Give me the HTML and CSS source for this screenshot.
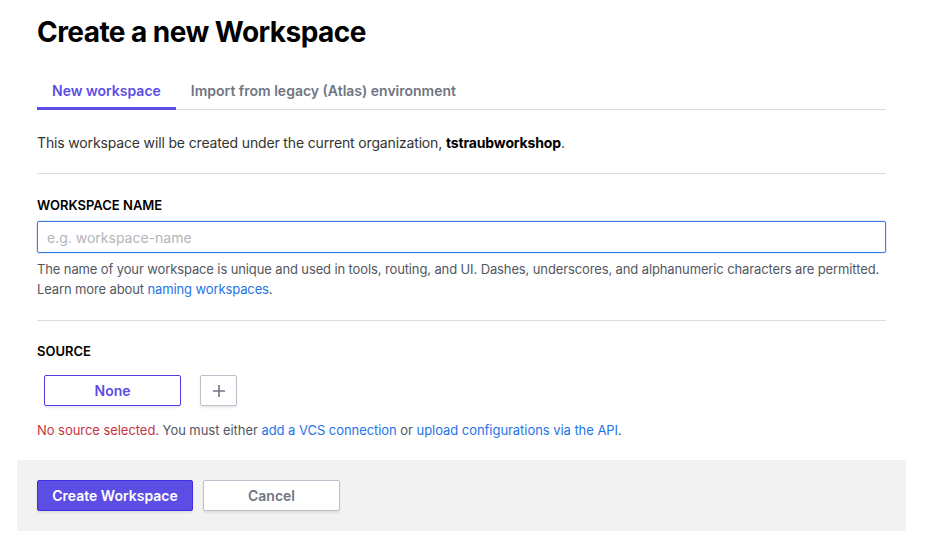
FILE: index.html
```html
<!DOCTYPE html>
<html lang="en">
<head>
<meta charset="utf-8">
<title>Create a new Workspace</title>
<link rel="stylesheet" href="styles.css">
</head>
<body>
<div class="page">
  <div class="content">
    <h1 class="title">Create a new Workspace</h1>
    <nav class="tabs">
      <a class="tab tab-active">New workspace</a>
      <a class="tab">Import from legacy (Atlas) environment</a>
    </nav>
    <p class="desc">This workspace will be created under the current organization, <strong>tstraubworkshop</strong>.</p>
    <hr class="rule">
    <div class="field">
      <label class="label">WORKSPACE NAME</label>
      <input class="input" type="text" placeholder="e.g. workspace-name">
      <p class="help">The name of your workspace is unique and used in tools, routing, and UI. Dashes, underscores, and alphanumeric characters are permitted. Learn more about <a class="link">naming workspaces</a>.</p>
    </div>
    <hr class="rule rule-tight">
    <div class="field field-source">
      <div class="label">SOURCE</div>
      <div class="source-row">
        <button class="btn btn-source">None</button>
        <button class="btn btn-plus" aria-label="Add">
          <svg width="14" height="14" viewBox="0 0 14 14"><path d="M7 1v12M1 7h12" stroke="#6f7682" stroke-width="1.6" fill="none"/></svg>
        </button>
      </div>
      <p class="help error-line"><span class="err">No source selected.</span> You must either <a class="link">add a VCS connection</a> or <a class="link">upload configurations via the API</a>.</p>
    </div>
  </div>
  <div class="footer">
    <button class="btn btn-primary">Create Workspace</button>
    <button class="btn btn-cancel">Cancel</button>
  </div>
</div>
</body>
</html>
```
FILE: styles.css
```css
* { box-sizing: border-box; }
html, body { margin: 0; padding: 0; background: #fff; }
body {
  font-family: Inter, "Noto Sans", "Liberation Sans", sans-serif;
  color: #000;
}
.page {
  margin-left: 17px;
  width: 889px;
}
.content {
  padding: 0 20px;
}
.title {
  margin: 15px 0 0;
  font-size: 28px;
  line-height: 34px;
  font-weight: 700;
  letter-spacing: -0.55px;
}
.tabs {
  margin-top: 31px;
  display: flex;
  box-shadow: inset 0 -1px 0 #dcdcdc;
}
.tab {
  padding: 1px 15px 6px;
  font-size: 14px;
  line-height: 20px;
  font-weight: 600;
  color: #6f7682;
  border-bottom: 3px solid transparent;
}
.tab-active {
  color: #5c4ee5;
  border-bottom-color: #5c4ee5;
}
.desc {
  margin: 23px 0 0;
  font-size: 14px;
  line-height: 20px;
  color: #333;
  letter-spacing: -0.15px;
}
.desc strong { color: #000; font-weight: 700; }
.rule {
  margin: 20px 0 0;
  border: 0;
  height: 1px;
  background: #dcdcdc;
}
.rule-tight { margin-top: 21px; }
.field {
  padding-top: 22px;
}
.field-source { padding-top: 21px; }
.label {
  display: block;
  font-size: 13px;
  line-height: 18px;
  font-weight: 600;
  color: #000;
}
.input {
  display: block;
  width: 100%;
  height: 32px;
  margin-top: 7px;
  padding: 0 9px;
  border: 1px solid #3d7ee8;
  border-radius: 2px;
  font-family: inherit;
  font-size: 14px;
  outline: none;
  box-shadow: 0 0 0 1px rgba(61,126,232,0.15);
}
.input::placeholder { color: #b3b5b9; }
.help {
  margin: 6px 0 0;
  font-size: 13px;
  line-height: 20px;
  color: #525761;
  letter-spacing: -0.12px;
}
.link { color: #1f73e8; text-decoration: none; }
.source-row {
  display: flex;
  gap: 19px;
  margin-top: 15px;
  padding-left: 7px;
}
.btn {
  height: 31px;
  font-family: inherit;
  font-size: 14px;
  font-weight: 600;
  border-radius: 2px;
  background: #fff;
  display: inline-flex;
  align-items: center;
  justify-content: center;
  box-shadow: 0 2px 2px rgba(0,0,0,0.08);
  padding: 0;
}
.btn-source {
  width: 137px;
  border: 1px solid #4d3fe0;
  color: #5c4ee5;
}
.btn-plus {
  width: 37px;
  border: 1px solid #bac1cc;
}
.error-line { margin-top: 14px; letter-spacing: -0.05px; }
.err { color: #c73445; }
.footer {
  margin-top: 20px;
  background: #f2f2f2;
  padding: 20px;
  display: flex;
  gap: 10px;
}
.btn-primary {
  width: 156px;
  background: #5c4ee5;
  border: 1px solid #3e2fe0;
  color: #fff;
}
.btn-cancel {
  width: 137px;
  border: 1px solid #bac1cc;
  color: #6f7682;
}
```
